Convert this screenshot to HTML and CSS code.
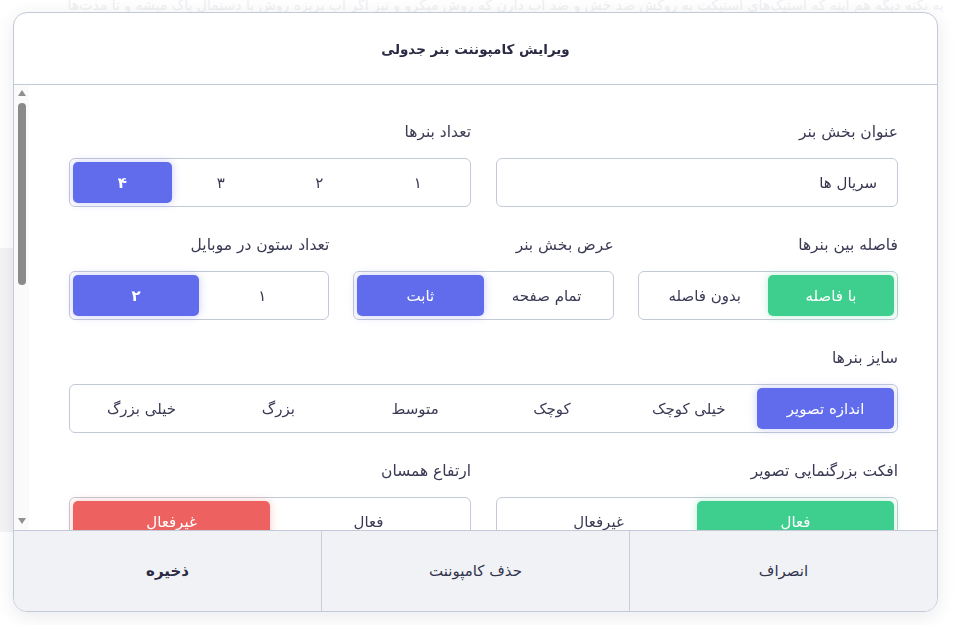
FILE: index.html
```html
<!DOCTYPE html>
<html lang="fa">
<head>
<meta charset="utf-8">
<title>ویرایش کامپوننت بنر جدولی</title>
<link rel="stylesheet" href="styles.css">
</head>
<body>
<div class="page">
  <p class="bg-text" dir="rtl">یه نکته دیگه هم اینه که استیک‌های استیکت به روکش ضد خش و ضد آب دارن که روش میکرو و نیز اگر آب بریزه روش با دستمال پاک میشه و تا مدت‌ها</p>
  <div class="bg-card"></div>
</div>

<div class="modal" dir="rtl">
  <header class="modal-head">
    <h2 class="modal-title">ویرایش کامپوننت بنر جدولی</h2>
  </header>

  <div class="modal-body">
    <div class="scroll-area">
      <div class="form">
        <div class="row cols-2">
          <div class="field">
            <label class="label">عنوان بخش بنر</label>
            <input class="input" type="text" value="سریال ها">
          </div>
          <div class="field">
            <label class="label">تعداد بنرها</label>
            <div class="seg">
              <span class="opt">۱</span>
              <span class="opt">۲</span>
              <span class="opt">۳</span>
              <span class="opt on blue num">۴</span>
            </div>
          </div>
        </div>

        <div class="row cols-3">
          <div class="field">
            <label class="label">فاصله بین بنرها</label>
            <div class="seg">
              <span class="opt on green">با فاصله</span>
              <span class="opt">بدون فاصله</span>
            </div>
          </div>
          <div class="field">
            <label class="label">عرض بخش بنر</label>
            <div class="seg">
              <span class="opt">تمام صفحه</span>
              <span class="opt on blue">ثابت</span>
            </div>
          </div>
          <div class="field">
            <label class="label">تعداد ستون در موبایل</label>
            <div class="seg">
              <span class="opt">۱</span>
              <span class="opt on blue num">۲</span>
            </div>
          </div>
        </div>

        <div class="row cols-1">
          <div class="field">
            <label class="label">سایز بنرها</label>
            <div class="seg">
              <span class="opt on blue">اندازه تصویر</span>
              <span class="opt">خیلی کوچک</span>
              <span class="opt">کوچک</span>
              <span class="opt">متوسط</span>
              <span class="opt">بزرگ</span>
              <span class="opt">خیلی بزرگ</span>
            </div>
          </div>
        </div>

        <div class="row cols-2">
          <div class="field">
            <label class="label">افکت بزرگنمایی تصویر</label>
            <div class="seg">
              <span class="opt on green">فعال</span>
              <span class="opt">غیرفعال</span>
            </div>
          </div>
          <div class="field">
            <label class="label">ارتفاع همسان</label>
            <div class="seg">
              <span class="opt">فعال</span>
              <span class="opt on red">غیرفعال</span>
            </div>
          </div>
        </div>
      </div>
    </div>

    <div class="scrollbar" aria-hidden="true">
      <span class="sb-arrow up"></span>
      <span class="sb-thumb"></span>
      <span class="sb-fill"></span>
      <span class="sb-arrow down"></span>
    </div>
  </div>

  <footer class="modal-foot">
    <button class="foot-btn" type="button">انصراف</button>
    <button class="foot-btn" type="button">حذف کامپوننت</button>
    <button class="foot-btn strong" type="button">ذخیره</button>
  </footer>
</div>
</body>
</html>
```

FILE: styles.css
```css
* { box-sizing: border-box; }

html, body {
  margin: 0;
  padding: 0;
  width: 954px;
  height: 625px;
  overflow: hidden;
  background: #ffffff;
  font-family: "DejaVu Sans", "Noto Sans", sans-serif;
}

.page {
  width: 954px;
  height: 625px;
}

.bg-text {
  margin: -5px 0 0 0;
  padding: 0 10px;
  font-size: 14px;
  line-height: 20px;
  color: #efeff3;
  white-space: nowrap;
  overflow: hidden;
}

.bg-card {
  margin-top: 233px;
  width: 13px;
  height: 284px;
  background: #f4f4f6;
}

.modal {
  position: fixed;
  top: 12px;
  left: 13px;
  width: 925px;
  height: 600px;
  background: #ffffff;
  border: 1px solid #c3c9d6;
  border-radius: 14px;
  box-shadow: 0 4px 18px rgba(40, 50, 80, 0.10);
  display: flex;
  flex-direction: column;
  overflow: hidden;
}

.modal-head {
  height: 72px;
  flex: none;
  display: flex;
  align-items: center;
  justify-content: center;
  border-bottom: 1px solid #c3c9d6;
}

.modal-title {
  margin: 0;
  font-size: 13.5px;
  font-weight: bold;
  color: #2a2a44;
}

.modal-body {
  flex: 1;
  min-height: 0;
  display: flex;
}

.scroll-area {
  flex: 1;
  min-width: 0;
  overflow: hidden;
}

.scrollbar {
  width: 15px;
  flex: none;
  background: #fafafa;
  display: flex;
  flex-direction: column;
  align-items: center;
  padding: 5px 0 6px;
}

.sb-arrow {
  width: 0;
  height: 0;
  border-left: 4px solid transparent;
  border-right: 4px solid transparent;
}
.sb-arrow.up { border-bottom: 6px solid #8f8f8f; }
.sb-arrow.down { border-top: 6px solid #8f8f8f; }

.sb-thumb {
  margin-top: 7px;
  width: 8px;
  height: 182px;
  border-radius: 4px;
  background: #8a8a8a;
}

.sb-fill { flex: 1; }

.form {
  padding: 37px 39px 40px 40px;
  display: flex;
  flex-direction: column;
  gap: 28px;
}

.row {
  display: grid;
  column-gap: 25px;
}
.cols-1 { grid-template-columns: 1fr; }
.cols-2 { grid-template-columns: 1fr 1fr; }
.cols-3 { grid-template-columns: 1fr 1fr 1fr; column-gap: 24px; }

.field {
  display: flex;
  flex-direction: column;
}

.label {
  font-size: 15.5px;
  line-height: 20px;
  color: #3a3a55;
  margin-bottom: 16px;
}

.input {
  height: 49px;
  border: 1px solid #c3c9d6;
  border-radius: 6px;
  padding: 0 20px;
  font-family: inherit;
  font-size: 15px;
  color: #33334d;
  background: #fff;
  direction: rtl;
  outline: none;
}

.seg {
  height: 49px;
  border: 1px solid #c3c9d6;
  border-radius: 6px;
  padding: 3px;
  display: flex;
  background: #fff;
}

.opt {
  flex: 1;
  display: flex;
  align-items: center;
  justify-content: center;
  border-radius: 5px;
  font-size: 15px;
  color: #3a3a55;
}

.opt.on { color: #ffffff; }
.opt.num { font-weight: bold; }
.opt.blue { background: #606cec; box-shadow: 0 0 8px rgba(96, 108, 236, 0.35); }
.opt.green { background: #3ecf8e; box-shadow: 0 0 8px rgba(62, 207, 142, 0.35); }
.opt.red { background: #ee6161; box-shadow: 0 0 8px rgba(238, 97, 97, 0.35); }

.modal-foot {
  height: 81px;
  flex: none;
  display: flex;
  background: #f1f2f5;
  border-top: 1px solid #c3c9d6;
}

.foot-btn {
  flex: 1;
  border: 0;
  background: transparent;
  font-family: inherit;
  font-size: 15px;
  color: #33334d;
  cursor: pointer;
}
.foot-btn + .foot-btn { border-right: 1px solid #c8cdd8; }
.foot-btn.strong { font-weight: bold; color: #2a2a44; }
```
